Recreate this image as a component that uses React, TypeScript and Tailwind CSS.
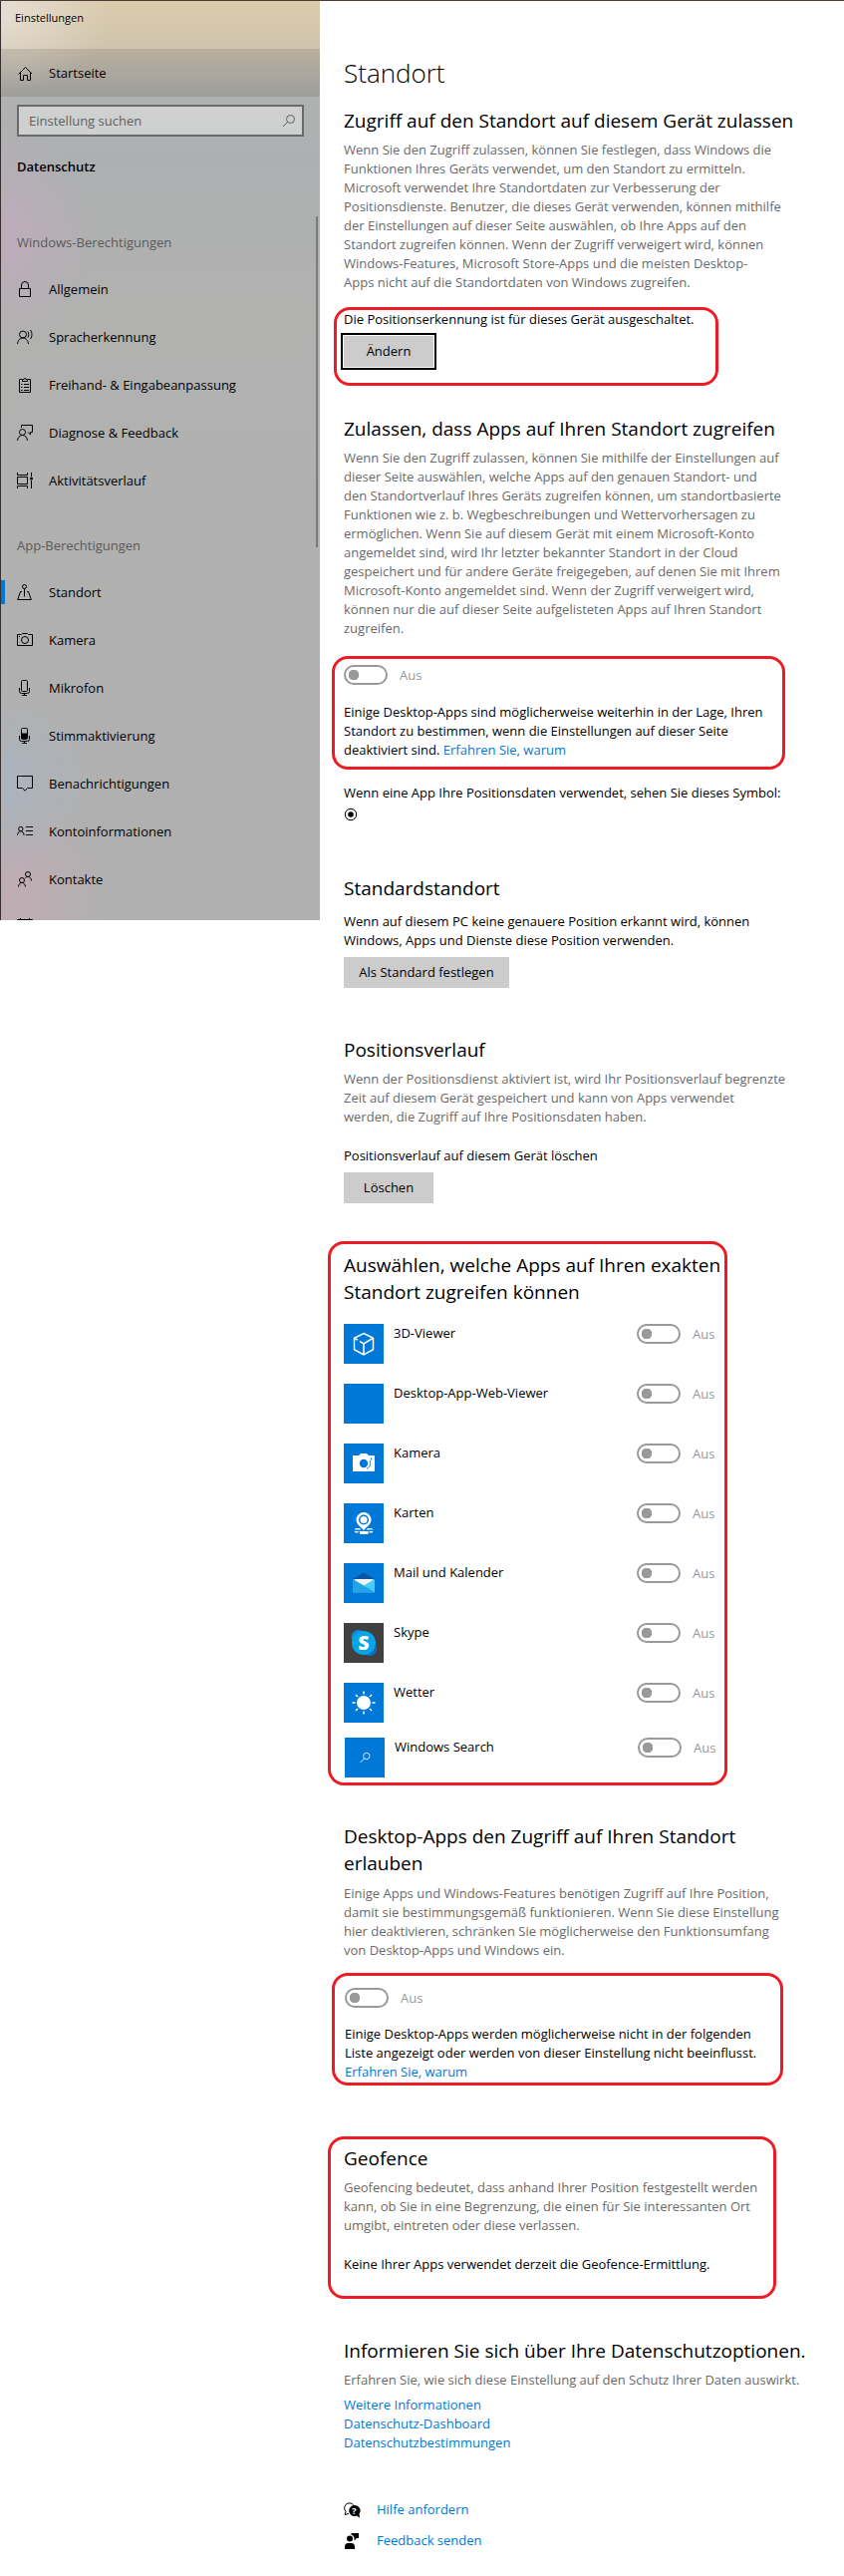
import { useState, type ReactNode } from 'react';
import clsx from 'clsx';

type NavItem = { id: string; label?: string; icon: ReactNode; active?: boolean };

function NavIcon({ children }: { children: ReactNode }) {
  return (
    <svg viewBox="0 0 16 16" className="h-4 w-4 shrink-0 overflow-visible" fill="none" stroke="currentColor" strokeWidth="1">
      {children}
    </svg>
  );
}

const windowsItems: NavItem[] = [
  {
    id: 'general',
    label: 'Allgemein',
    icon: <path d="M2.5 7.5h11v8h-11zM4.5 7.500V4a3.500 3.500 0 0 1 7 0v3.500" />,
  },
  {
    id: 'speech',
    label: 'Spracherkennung',
    icon: (
      <>
        <circle cx="6" cy="5.500" r="3.500" />
        <path d="M.5 15c.3-3.500 2.500-6 5.500-6s5.200 2.500 5.500 6M11 2.500c1 1.700 1 4.300 0 6M13.500 1c2 2.600 2 6.400 0 9" />
      </>
    ),
  },
  {
    id: 'inking',
    label: 'Freihand- & Eingabeanpassung',
    icon: (
      <>
        <path d="M5 2.500H2.500v13h11v-13H11M5.500 4.500v-2h1.500a1 1 0 0 1 2 0h1.500v2zM7 7.500h5M7 10.500h5M7 13.500h5" />
        <path d="M4 7.500h2M4 10.500h2M4 13.500h2" strokeDasharray="1 .5" />
      </>
    ),
  },
  {
    id: 'diagnostics',
    label: 'Diagnose & Feedback',
    icon: (
      <>
        <circle cx="5.500" cy="7.500" r="3" />
        <path d="M.5 16c.3-3.200 2.300-5.500 5-5.500s4.700 2.300 5 5.500M4.500 3V.5h11v7h-2v2.500l-2.500-2.500" />
      </>
    ),
  },
  {
    id: 'activity',
    label: 'Aktivitätsverlauf',
    icon: (
      <>
        <path d="M.5 4.500h10v7H.500zM.5 0v2.500h10V0M.5 16v-2.500h10V16M14.500 0v4M14.500 8v8" />
        <circle cx="14.500" cy="6" r="1.500" fill="currentColor" stroke="none" />
      </>
    ),
  },
];

const appItems: NavItem[] = [
  {
    id: 'location',
    label: 'Standort',
    active: true,
    icon: (
      <>
        <circle cx="7.500" cy="2.500" r="2" />
        <path d="M7.500 4.500v8M5 7.500H3.500L.7 15.500h13.600l-2.800-8H10" />
      </>
    ),
  },
  {
    id: 'camera',
    label: 'Kamera',
    icon: (
      <>
        <path d="M.5 2.500h4l1-1h5l1 1h4v11H.500zM2 4.500h1" />
        <circle cx="8" cy="8" r="3.500" />
      </>
    ),
  },
  {
    id: 'microphone',
    label: 'Mikrofon',
    icon: (
      <path d="M5.500.5h4a1 1 0 0 1 1 1v9a1 1 0 0 1-1 1h-4a1 1 0 0 1-1-1v-9a1 1 0 0 1 1-1zM2.500 8v3.500a2 2 0 0 0 2 2h6a2 2 0 0 0 2-2V8M7.500 13.500v2M5 15.500h5" />
    ),
  },
  {
    id: 'voice',
    label: 'Stimmaktivierung',
    icon: (
      <>
        <path d="M5.500.5h4a1 1 0 0 1 1 1v9a1 1 0 0 1-1 1h-4a1 1 0 0 1-1-1v-9a1 1 0 0 1 1-1zM2.500 8v3.500a2 2 0 0 0 2 2h6a2 2 0 0 0 2-2V8M7.500 13.500v2M5 15.500h5" />
        <path d="M5 6h5v5H5z" fill="currentColor" />
      </>
    ),
  },
  {
    id: 'notifications',
    label: 'Benachrichtigungen',
    icon: <path d="M.5 .5h15v12h-5L8 15.200l-2.500-2.700h-5z" />,
  },
  {
    id: 'account',
    label: 'Kontoinformationen',
    icon: (
      <>
        <circle cx="3.800" cy="5.500" r="2.200" />
        <path d="M.5 12c.2-2.600 1.400-4.200 3.300-4.200S6.900 9.400 7.100 12M9 3.500h7M9 7.500h7M9 11.500h7" />
      </>
    ),
  },
  {
    id: 'contacts',
    label: 'Kontakte',
    icon: (
      <>
        <circle cx="11" cy="3" r="2.500" />
        <circle cx="5" cy="9" r="2.500" />
        <path d="M1.500 15.500c.2-2.400 1.600-4 3.500-4s3.300 1.600 3.500 4M8.300 6.500c.7-.7 1.600-1 2.700-1 2 0 3.300 1.500 3.500 4" />
      </>
    ),
  },
  {
    id: 'calendar',
    icon: <path d="M.5 .5h15v14H.500zM3.500-1v3M12.500-1v3M.5 4.500h15" />,
  },
];

const apps = [
  {
    name: '3D-Viewer',
    icon: (
      <path
        d="M20 9.500l9.500 4.800v11.400L20 30.800l-9.500-5.100V14.300zM11 14.500l3 1.700M16 17.500l4 2.300 9-5.300M20 19.800v10.500"
        fill="none"
        stroke="#fff"
        strokeWidth="1.500"
      />
    ),
  },
  { name: 'Desktop-App-Web-Viewer', icon: null },
  {
    name: 'Kamera',
    icon: (
      <>
        <path d="M9 12h6l2-2h6l2 2h6v16H9z" fill="#fff" />
        <circle cx="20" cy="20" r="4.200" fill="#0078d7" />
        <path d="M23 25.500c3.500-1.800 4.300-5.500 3-8.500M27.500 14.500v2" fill="none" stroke="#0078d7" />
      </>
    ),
  },
  {
    name: 'Karten',
    icon: (
      <>
        <path d="M20 27.500c-1.500-3.500-7.500-5.500-7.500-11a7.500 7.500 0 1 1 15 0c0 5.500-6 7.500-7.500 11z" fill="#fff" />
        <circle cx="20" cy="16.500" r="4.300" fill="#fff" stroke="#0078d7" strokeWidth="1.500" />
        <path d="M12 25h4l1.500 1.500h-7zM28 25h-4l-1.500 1.500h7zM10.500 28h4v1.500h-3zM29.500 28h-4v1.500h3zM15.500 28h9v3h-8z" fill="#fff" />
      </>
    ),
  },
  {
    name: 'Mail und Kalender',
    icon: (
      <>
        <path d="M9 16l11-6.500L31 16v3H9z" fill="#0a55a5" />
        <path d="M10.500 16h19v8h-19z" fill="#f4f4f4" />
        <path d="M9 16l11 6.500L31 29.500H9z" fill="#28b0ec" />
        <path d="M31 16v13.500L20 22.500z" fill="#46cdf7" />
        <path d="M9 16l22 13.500H9z" fill="#1fa5e8" />
      </>
    ),
  },
  {
    name: 'Skype',
    icon: (
      <>
        <circle cx="14.500" cy="14" r="7" fill="#0a8bd6" />
        <circle cx="26" cy="26" r="7" fill="#0a6fc4" />
        <circle cx="20" cy="20" r="12" fill="#07a5e8" />
        <text x="20" y="27" textAnchor="middle" fill="#fff" fontSize="19" fontWeight="800" fontFamily="Open Sans, sans-serif">
          S
        </text>
      </>
    ),
    dark: true,
  },
  {
    name: 'Wetter',
    icon: (
      <>
        <circle cx="20" cy="20" r="7" fill="#fff" />
        <path
          d="M20 8.500v3M20 28.500v3M8.500 20h3M28.500 20h3M12 12l2 2M26 26l2 2M12 28l2-2M26 14l2-2"
          stroke="#fff"
          strokeWidth="1.500"
        />
      </>
    ),
  },
];

const searchApp = {
  name: 'Windows Search',
  icon: <path d="M15.500 25l4.500-4.500M25 18.500a3.200 3.200 0 1 1-6.400 0 3.200 3.200 0 0 1 6.400 0" fill="none" stroke="#cfe6fa" />,
};

function NavRow({ item }: { item: NavItem }) {
  return (
    <li>
      <a href="#" className="relative flex h-12 items-center gap-4 pl-4">
        {item.active && <span className="absolute top-3 left-0 h-6 w-1 bg-[#0078d7]" />}
        <NavIcon>{item.icon}</NavIcon>
        {item.label}
      </a>
    </li>
  );
}

function Toggle({ label }: { label: string }) {
  const [on, setOn] = useState(false);
  return (
    <label className="flex h-5 items-center gap-3 text-[#999]">
      <input
        type="checkbox"
        role="switch"
        aria-label={label}
        checked={on}
        onChange={(e) => setOn(e.target.checked)}
        className="h-5 w-11 appearance-none rounded-full border-2 border-[#999] bg-[radial-gradient(circle_at_8px_8px,#999_5px,transparent_5.5px)] checked:bg-[radial-gradient(circle_at_32px_8px,#999_5px,transparent_5.5px)]"
      />
      <span>{on ? 'Ein' : 'Aus'}</span>
    </label>
  );
}

function AppRow({ app }: { app: { name: string; icon: ReactNode; dark?: boolean } }) {
  return (
    <div className="flex h-10 items-start">
      <svg viewBox="0 0 40 40" className={clsx('h-10 w-10', app.dark ? 'bg-[#404040]' : 'bg-[#0078d7]')}>
        {app.icon}
      </svg>
      <span className="w-[254px] pl-2.5">{app.name}</span>
      <Toggle label={app.name} />
    </div>
  );
}

function Heading({ children }: { children: ReactNode }) {
  return <h2 className="text-[19px] leading-[27px] whitespace-pre-line">{children}</h2>;
}

function Muted({ children }: { children: ReactNode }) {
  return <p className="whitespace-pre-line text-[#6a6a6a]">{children}</p>;
}

// red highlight frame drawn over a block
function Mark({ className }: { className: string }) {
  return <span className={clsx('pointer-events-none absolute rounded-2xl border-3 border-[#ed1c24]', className)} />;
}

const buttonClass = 'block h-[31px] min-w-[90px] bg-[#ccc] px-3';
const linkClass = 'text-[#0078d7]';

export default function App() {
  return (
    <div className="flex items-start border-t border-[#4a3e34] bg-white font-['Open_Sans','Noto_Sans',sans-serif] text-[13px] leading-[19px] text-black">
      <aside className="relative h-[922px] w-[321px] shrink-0 overflow-hidden border-l border-[#35302e] bg-[radial-gradient(ellipse_90px_110px_at_0_235px,#bfacbc,#bfacbc00),radial-gradient(ellipse_90px_90px_at_0_785px,#abb4be,#abb4be00),radial-gradient(ellipse_110px_110px_at_0_900px,#c2acb5,#c2acb500),radial-gradient(ellipse_110px_80px_at_0_10px,#e6ded4,#e6ded400),linear-gradient(#dbcbaa_0px,#cfc4ae_48px,#b0b1b1_96px,#adb0b1_160px,#b1b1b0_300px,#b0b0b0_922px)]">
        <div className="h-12 pt-[7px] pl-3.5 text-[11px]">Einstellungen</div>
        <a href="#" className="flex h-12 items-center gap-4 bg-black/10 pt-px pl-4">
          <NavIcon>
            <path d="M1.500 8.500L8.500 1.500l6.500 6.500M3.500 7v7.500h3v-5h4v5h3V7" />
          </NavIcon>
          Startseite
        </a>
        <div className="mt-2 mr-4 ml-4 flex h-8 items-center border-2 border-[#6a6a6a] bg-white/40 pr-1.5 pl-2.5">
          <input
            type="text"
            aria-label="Einstellung suchen"
            placeholder="Einstellung suchen"
            className="min-w-0 flex-1 bg-transparent outline-none placeholder:text-[#5f5f5f]"
          />
          <svg viewBox="0 0 14 14" className="h-3.5 w-3.5" fill="none" stroke="#5f5f5f">
            <circle cx="8.500" cy="5.500" r="4" />
            <path d="M5.500 8.500L1 13" />
          </svg>
        </div>
        <h2 className="mt-[21px] pl-4 font-semibold">Datenschutz</h2>
        <nav className="mr-3">
          <h3 className="mt-[57px] pl-4 text-[#5a5a5a]">Windows-Berechtigungen</h3>
          <ul className="mt-[13px]">
            {windowsItems.map((item) => (
              <NavRow key={item.id} item={item} />
            ))}
          </ul>
          <h3 className="mt-8 pl-4 text-[#5a5a5a]">App-Berechtigungen</h3>
          <ul className="mt-[13px]">
            {appItems.map((item) => (
              <NavRow key={item.id} item={item} />
            ))}
          </ul>
        </nav>
        {/* scrollbar thumb */}
        <span className="absolute top-[216px] right-0.5 h-[332px] w-0.5 bg-[#7b7b7b]" />
      </aside>

      <main className="min-w-0 flex-1 pt-[54px] pb-[25px] pl-6">
        <h1 className="text-[26px] leading-9 font-light">Standort</h1>

        <section className="mt-[17px]">
          <Heading>Zugriff auf den Standort auf diesem Gerät zulassen</Heading>
          <div className="mt-1.5">
            <Muted>
              {`Wenn Sie den Zugriff zulassen, können Sie festlegen, dass Windows die
              Funktionen Ihres Geräts verwendet, um den Standort zu ermitteln.
              Microsoft verwendet Ihre Standortdaten zur Verbesserung der
              Positionsdienste. Benutzer, die dieses Gerät verwenden, können mithilfe
              der Einstellungen auf dieser Seite auswählen, ob Ihre Apps auf den
              Standort zugreifen können. Wenn der Zugriff verweigert wird, können
              Windows-Features, Microsoft Store-Apps und die meisten Desktop-
              Apps nicht auf die Standortdaten von Windows zugreifen.`}
            </Muted>
          </div>
          <div className="relative mt-[18px]">
            <Mark className="-top-[3px] -left-2.5 h-[79px] w-[386px]" />
            <p>Die Positionserkennung ist für dieses Gerät ausgeschaltet.</p>
            <button className={clsx(buttonClass, 'mt-[7px] outline-2 outline-offset-1 outline-black')}>Ändern</button>
          </div>
        </section>

        <section className="mt-[49px]">
          <Heading>Zulassen, dass Apps auf Ihren Standort zugreifen</Heading>
          <div className="mt-1.5">
            <Muted>
              {`Wenn Sie den Zugriff zulassen, können Sie mithilfe der Einstellungen auf
              dieser Seite auswählen, welche Apps auf den genauen Standort- und
              den Standortverlauf Ihres Geräts zugreifen können, um standortbasierte
              Funktionen wie z. b. Wegbeschreibungen und Wettervorhersagen zu
              ermöglichen. Wenn Sie auf diesem Gerät mit einem Microsoft-Konto
              angemeldet sind, wird Ihr letzter bekannter Standort in der Cloud
              gespeichert und für andere Geräte freigegeben, auf denen Sie mit Ihrem
              Microsoft-Konto angemeldet sind. Wenn der Zugriff verweigert wird,
              können nur die auf dieser Seite aufgelisteten Apps auf Ihren Standort
              zugreifen.`}
            </Muted>
          </div>
          <div className="relative mt-[27px]">
            <Mark className="-top-[9px] -left-3 h-[114px] w-[455px]" />
            <Toggle label="Apps auf Ihren Standort zugreifen lassen" />
            <p className="mt-[18px] whitespace-pre-line">
              {`Einige Desktop-Apps sind möglicherweise weiterhin in der Lage, Ihren
              Standort zu bestimmen, wenn die Einstellungen auf dieser Seite
              deaktiviert sind. `}
              <a href="#" className={linkClass}>Erfahren Sie, warum</a>
            </p>
          </div>
          <p className="mt-6">Wenn eine App Ihre Positionsdaten verwendet, sehen Sie dieses Symbol:</p>
          <svg viewBox="0 0 14 14" className="mt-[5px] h-3.5 w-3.5">
            <circle cx="7" cy="7" r="5.700" fill="none" stroke="#000" />
            <circle cx="7" cy="7" r="2.800" />
          </svg>
        </section>

        <section className="mt-[54px]">
          <Heading>Standardstandort</Heading>
          <p className="mt-2.5 whitespace-pre-line">
            {`Wenn auf diesem PC keine genauere Position erkannt wird, können
            Windows, Apps und Dienste diese Position verwenden.`}
          </p>
          <button className={clsx(buttonClass, 'mt-[7px] w-[166px]')}>Als Standard festlegen</button>
        </section>

        <section className="mt-[49px]">
          <Heading>Positionsverlauf</Heading>
          <div className="mt-1.5">
            <Muted>
              {`Wenn der Positionsdienst aktiviert ist, wird Ihr Positionsverlauf begrenzte
              Zeit auf diesem Gerät gespeichert und kann von Apps verwendet
              werden, die Zugriff auf Ihre Positionsdaten haben.`}
            </Muted>
          </div>
          <p className="mt-5">Positionsverlauf auf diesem Gerät löschen</p>
          <button className={clsx(buttonClass, 'mt-[7px]')}>Löschen</button>
        </section>

        <section className="relative mt-[49px]">
          <Mark className="-top-[11px] -left-4 h-[546px] w-[401px]" />
          <Heading>{`Auswählen, welche Apps auf Ihren exakten
          Standort zugreifen können`}</Heading>
          <div className="mt-[18px] flex flex-col gap-5">
            {apps.map((app) => (
              <AppRow key={app.name} app={app} />
            ))}
          </div>
          <div className="mt-[15px] ml-px">
            <AppRow app={searchApp} />
          </div>
        </section>

        <section className="mt-[46px]">
          <Heading>{`Desktop-Apps den Zugriff auf Ihren Standort
          erlauben`}</Heading>
          <div className="mt-[7px]">
            <Muted>
              {`Einige Apps und Windows-Features benötigen Zugriff auf Ihre Position,
              damit sie bestimmungsgemäß funktionieren. Wenn Sie diese Einstellung
              hier deaktivieren, schränken Sie möglicherweise den Funktionsumfang
              von Desktop-Apps und Windows ein.`}
            </Muted>
          </div>
          <div className="relative mt-7 pl-px">
            <Mark className="-top-[15px] -left-3 h-[113px] w-[453px]" />
            <Toggle label="Desktop-Apps den Zugriff erlauben" />
            <p className="mt-[17px] whitespace-pre-line">
              {`Einige Desktop-Apps werden möglicherweise nicht in der folgenden
              Liste angezeigt oder werden von dieser Einstellung nicht beeinflusst.
              `}
              <a href="#" className={linkClass}>Erfahren Sie, warum</a>
            </p>
          </div>
        </section>

        <section className="relative mt-16">
          <Mark className="-top-[9px] -left-4 h-[163px] w-[450px]" />
          <Heading>Geofence</Heading>
          <div className="mt-1.5">
            <Muted>
              {`Geofencing bedeutet, dass anhand Ihrer Position festgestellt werden
              kann, ob Sie in eine Begrenzung, die einen für Sie interessanten Ort
              umgibt, eintreten oder diese verlassen.`}
            </Muted>
          </div>
          <p className="mt-5">Keine Ihrer Apps verwendet derzeit die Geofence-Ermittlung.</p>
        </section>

        <section className="mt-16">
          <Heading>Informieren Sie sich über Ihre Datenschutzoptionen.</Heading>
          <div className="mt-1.5">
            <Muted>Erfahren Sie, wie sich diese Einstellung auf den Schutz Ihrer Daten auswirkt.</Muted>
          </div>
          <ul className="mt-1.5">
            <li><a href="#" className={linkClass}>Weitere Informationen</a></li>
            <li><a href="#" className={linkClass}>Datenschutz-Dashboard</a></li>
            <li><a href="#" className={linkClass}>Datenschutzbestimmungen</a></li>
          </ul>
        </section>

        <footer className="mt-12 flex flex-col gap-3">
          <a href="#" className={clsx(linkClass, 'flex items-center gap-4')}>
            <svg viewBox="0 0 17 16" className="h-4 w-[17px] text-black">
              <path d="M1 12.500l1-3A5 5 0 1 1 9.500 2.500M1 12.500l4-1" fill="none" stroke="currentColor" />
              <path d="M10.500 3a5.500 5.500 0 1 0 2.500 10.500l3 2.200-.5-4A5.500 5.500 0 0 0 10.500 3z" />
              <text x="10.500" y="12" textAnchor="middle" fill="#fff" fontSize="9" fontWeight="700">
                ?
              </text>
            </svg>
            Hilfe anfordern
          </a>
          <a href="#" className={clsx(linkClass, 'flex items-center gap-4')}>
            <svg viewBox="0 0 17 16" className="h-4 w-[17px] text-black">
              <circle cx="6" cy="5.500" r="3" />
              <path d="M1 16v-2.500A3.500 3.500 0 0 1 4.500 10h3a3.500 3.500 0 0 1 3.500 3.500V16zM7.500 0H15v5h-2l-2.500 2.500V5a4.500 4.500 0 0 0-3-3.500z" />
            </svg>
            Feedback senden
          </a>
        </footer>
      </main>
    </div>
  );
}
